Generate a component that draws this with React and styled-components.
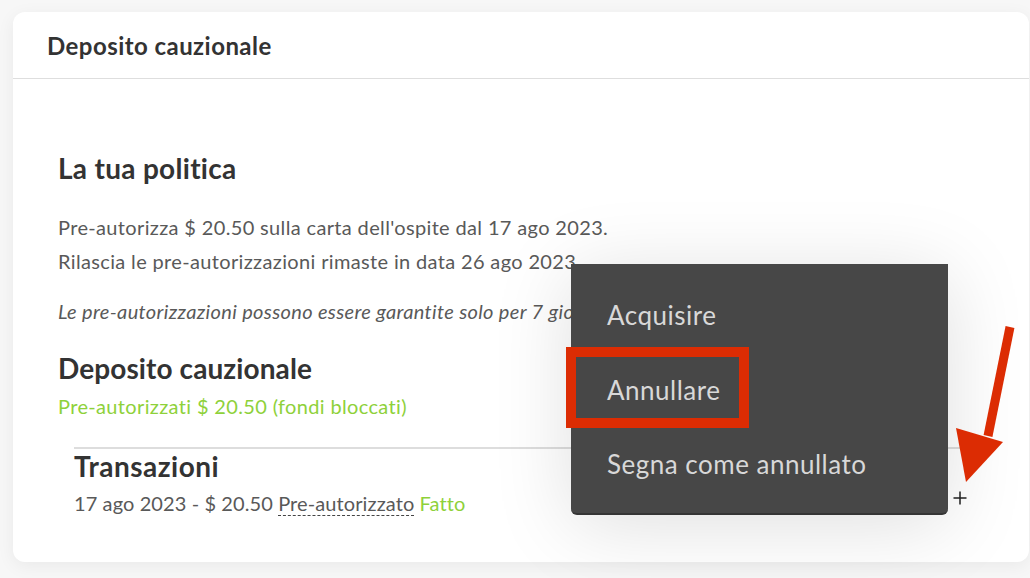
import React from "react";
import styled, { createGlobalStyle } from "styled-components";

const Global = createGlobalStyle`
    html, body {
        margin: 0;
        padding: 0;
        background: #f7f7f7;
        font-family: Lato, "Liberation Sans", sans-serif;
        color: #585858;
    }
    * { box-sizing: border-box; }
`;

const Page = styled.div`
    width: 1030px;
    height: 578px;
    padding: 12px 0 0 13px;
    overflow: hidden;
    position: relative;
`;

const Card = styled.div`
    width: 1016px;
    height: 550px;
    background: #fff;
    border-radius: 12px;
    box-shadow: 0 4px 18px rgba(0, 0, 0, 0.06);
`;

const Header = styled.div`
    height: 67px;
    display: flex;
    align-items: center;
    padding: 0 34px;
    border-bottom: 1px solid #dedede;
`;

const HeaderTitle = styled.h2`
    margin: 0;
    font-size: 24px;
    letter-spacing: 0.45px;
    font-weight: 700;
    color: #333;
`;

const Body = styled.div`
    padding: 71px 45px 0 45px;
`;

const Title = styled.h3`
    margin: 0;
    font-size: 28px;
    letter-spacing: ${p => p.spacing || 0.2}px;
    line-height: ${p => p.lh || 36}px;
    font-weight: 700;
    color: #333;
`;

const Text = styled.p`
    margin: 0;
    font-size: 20px;
    letter-spacing: 0.35px;
    line-height: 34px;
    font-style: ${p => (p.italic ? "italic" : "normal")};
    color: ${p => (p.green ? "#8ed13a" : "#595959")};
`;

const Policy = styled.div`
    margin: 24px 0 22px;
`;

const Note = styled(Text)`
    margin-top: 16px;
`;

const Deposit = styled.div`
    display: flex;
    flex-direction: column;
    gap: 3px;
`;

const Transactions = styled.div`
    margin: 24px 0 0 16px;
    width: 894px;
    border-top: 2px solid #dddddd;
`;

const Row = styled.div`
    display: flex;
    align-items: center;
    justify-content: space-between;
    margin-top: 5px;
    font-size: 20px;
    letter-spacing: 0.1px;
    line-height: 30px;
    color: #595959;
`;

const Dotted = styled.span`
    border-bottom: 1px dashed #444;
    line-height: 24px;
    display: inline-block;
`;

const Green = styled.span`
    color: #8ed13a;
`;

const Plus = styled.svg`
    margin: 0 1px 0 0;
    transform: translateY(-5px);
`;

const Menu = styled.div`
    position: absolute;
    left: 571px;
    top: 264px;
    width: 377px;
    height: 251px;
    background: #474747;
    border-radius: 0 0 6px 6px;
    border-bottom: 2px solid #353535;
    box-shadow: 0 10px 80px rgba(0, 0, 0, 0.13);
    padding: 14px 0 0 36px;
    display: flex;
    flex-direction: column;
    z-index: 2;
`;

const MenuItem = styled.div`
    position: relative;
    flex-shrink: 0;
    height: 74.5px;
    display: flex;
    align-items: center;
    font-size: 26px;
    letter-spacing: 0.5px;
    color: #d8d8d8;
`;

const Highlight = styled.span`
    position: absolute;
    left: -41px;
    top: -6px;
    width: 183px;
    height: 81px;
    border: 10px solid #dc2c03;
`;

const Arrow = styled.svg`
    position: absolute;
    left: 950px;
    top: 320px;
    z-index: 3;
`;

export default function App() {
    return (
        <Page>
            <Global />
            <Card>
                <Header>
                    <HeaderTitle>Deposito cauzionale</HeaderTitle>
                </Header>
                <Body>
                    <Title spacing={0.3}>La tua politica</Title>
                    <Policy>
                        <Text>Pre-autorizza $ 20.50 sulla carta dell'ospite dal 17 ago 2023.</Text>
                        <Text>Rilascia le pre-autorizzazioni rimaste in data 26 ago 2023.</Text>
                        <Note italic>Le pre-autorizzazioni possono essere garantite solo per 7 giorni.</Note>
                    </Policy>
                    <Deposit>
                        <Title spacing={0.1}>Deposito cauzionale</Title>
                        <Text green>Pre-autorizzati $ 20.50 (fondi bloccati)</Text>
                    </Deposit>
                    <Transactions>
                        <Title spacing={0.5} lh={34}>Transazioni</Title>
                        <Row>
                            <span>
                                17 ago 2023 - $ 20.50 <Dotted>Pre-autorizzato</Dotted> <Green>Fatto</Green>
                            </span>
                            <Plus width="14" height="14" viewBox="0 0 14 14">
                                <path d="M7 0.5v13M0.5 7h13" stroke="#222" strokeWidth="1.5" />
                            </Plus>
                        </Row>
                    </Transactions>
                </Body>
            </Card>
            <Menu>
                <MenuItem>Acquisire</MenuItem>
                <MenuItem>
                    <Highlight />
                    Annullare
                </MenuItem>
                <MenuItem>Segna come annullato</MenuItem>
            </Menu>
            <Arrow width="70" height="170" viewBox="0 0 70 170">
                <line x1="60" y1="7" x2="38" y2="116" stroke="#dc2c03" strokeWidth="9" />
                <polygon points="6,108 53,122 16,162" fill="#dc2c03" />
            </Arrow>
        </Page>
    );
}
